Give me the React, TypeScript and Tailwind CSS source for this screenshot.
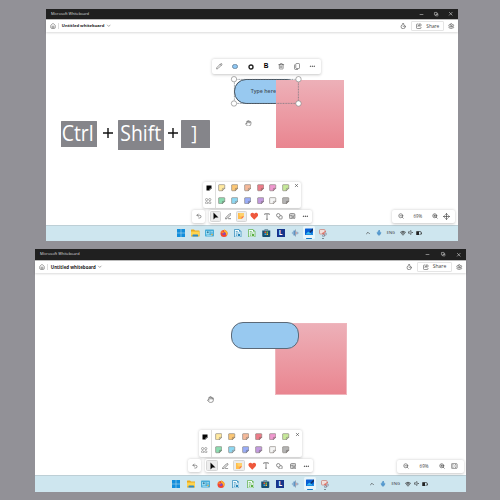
import React from "react";
import {
  ChevronDown, ChevronUp, Copy, Ellipsis, Hand, House, Mic, PenLine, Pencil, Settings,
  Timer, Trash2, Undo2, Wifi, X, ZoomIn, ZoomOut, Minus, Move,
} from "lucide-react";

type Size = "small" | "large";

const Cell = ({ w, children, className = "" }: { w: string; children?: React.ReactNode; className?: string }) => (
  <span className={`flex h-full shrink-0 items-center justify-center ${w} ${className}`}>{children}</span>
);

const Note = ({ color, fold, s = 7.4 }: { color: string; fold: string; s?: number }) => (
  <svg width={s} height={s} viewBox="0 0 14 14" className="shrink-0">
    <path d="M1.2 2.4Q1.2 1.2 2.4 1.2H11.6Q12.8 1.2 12.8 2.4V8.2L8.2 12.8H2.4Q1.2 12.8 1.2 11.6Z" fill={color} stroke="#85807a" strokeWidth="1.2" />
    <path d="M8.2 12.8V9.4Q8.2 8.2 9.4 8.2H12.8Z" fill={fold} stroke="#77736f" strokeWidth="1" />
  </svg>
);

const Pattern = () => (
  <svg width="6.4" height="6.4" viewBox="0 0 12 12" fill="none" stroke="#666" strokeWidth="1">
    {[3, 9].map((x) => [3, 9].map((y) => <circle key={`${x}-${y}`} cx={x} cy={y} r="2.1" />))}
  </svg>
);

const Black = () => (
  <svg width="6" height="6" viewBox="0 0 12 12">
    <path d="M1 1H11V7L7 11H1Z" fill="#050505" />
    <path d="M7 11V8Q7 7 8 7H11Z" fill="#bbb" />
  </svg>
);

const firstRow = [["#ffe9a0", "#fff1bd"], ["#fcc775", "#f7b760"], ["#f5b999", "#f1c7ae"], ["#ed7c89", "#e66576"], ["#ef98cf", "#e97fbf"], ["#c7e99a", "#d8f3b4"]];
const secondRow = [["#8cdcb1", "#6cce98"], ["#8ed8f3", "#b3e8f8"], ["#99adf8", "#8097ef"], ["#c39be0", "#b387d6"], ["#f5f5f5", "#ffffff"], ["#b4b4b4", "#929292"]];

const Palette = ({ size }: { size: Size }) => {
  const big = size === "large";
  const cell = big ? "w-[13.5px]" : "w-[12.8px]";
  const row = big ? "h-[13.4px]" : "h-[12.8px]";
  return (
    <div className={`absolute flex rounded-[2px] bg-white shadow-[0_0.5px_3px_rgba(0,0,0,0.22)] ${big ? "left-[163.5px] top-[181px] h-[27px] w-[103.5px]" : "left-[156.5px] top-[172.5px] h-[26px] w-[98.5px]"}`}>
      <div className="flex w-[13.1px] flex-col items-center border-r-[0.5px] border-[#ddd]">
        <Cell w="w-full" className="min-h-0 flex-1"><Black /></Cell>
        <Cell w="w-full" className="min-h-0 flex-1"><Pattern /></Cell>
      </div>
      <div>
        {[firstRow, secondRow].map((colors, i) => (
          <div key={i} className={`flex ${row}`}>
            {colors.map(([c, f]) => <Cell key={c} w={cell}><Note color={c} fold={f} /></Cell>)}
          </div>
        ))}
      </div>
      <X className={big ? "ml-[2.3px] mt-[1.5px] shrink-0" : "ml-[2.1px] mt-[1.8px] shrink-0"} size={5} color="#444" strokeWidth={2.8} />
    </div>
  );
};

const Shapes = () => (
  <svg width="6.5" height="6.5" viewBox="0 0 24 24" fill="none" stroke="#555" strokeWidth="2.4">
    <circle cx="8.5" cy="8.5" r="6.5" /><path d="M10.5 15v4.5q0 2.5 2.5 2.5h7q2.5 0 2.5-2.5v-7q0-2.5-2.5-2.5h-5" />
  </svg>
);

const Templates = () => (
  <svg width="6.4" height="6.4" viewBox="0 0 24 24" fill="none" stroke="#555" strokeWidth="2.4">
    <rect x="2" y="2" width="20" height="20" rx="4" /><path d="M2 8h20M8 8v14M13 13h5v5h-5z" />
  </svg>
);

const Heart = () => (
  <svg width="8.5" height="8.5" viewBox="0 0 24 24">
    <path d="M12 22L3 13C-3 5 7-2 12 5C17-2 27 5 21 13Z" fill="#ee583d" />
  </svg>
);

const Toolbar = ({ size }: { size: Size }) => {
  const big = size === "large";
  const cell = big ? "w-[13.5px]" : "w-[12.9px]";
  const hot = `rounded-[1.5px] border-[0.5px] border-[#d6d6d6] bg-[#ededed] ${big ? "h-[11px] w-[11.5px]" : "h-[10.5px] w-[11px]"} flex items-center justify-center`;
  const box = "flex items-center rounded-[2px] bg-white shadow-[0_0.5px_3px_rgba(0,0,0,0.22)]";
  return (
    <div className={`absolute flex ${big ? "left-[153.3px] top-[210.4px] h-[13px] gap-[4px]" : "left-[146px] top-[201px] h-[12.5px] gap-[3.8px]"}`}>
      <div className={`${box} w-[13px] justify-center`}><Undo2 size={6} color="#555" strokeWidth={2.4} /></div>
      <div className={box}>
        <Cell w={cell}>
          <span className={hot}>
            <svg width="7" height="8" viewBox="0 0 14 16"><path d="M3 1V15L7 11H13Z" fill="#080808" /></svg>
          </span>
        </Cell>
        <Cell w={cell}><PenLine size={6.5} color="#555" strokeWidth={2.6} /></Cell>
        <Cell w={cell}>
          <span className={hot}>
            <svg width="8" height="8" viewBox="0 0 16 16">
              <path d="M2 2H14V9L9 14H2Z" fill="#ffbd4c" /><path d="M14 2V9L9 14V10L5 7V2Z" fill="#ffd16b" /><path d="M9 14V10Q9 9 10 9H14Z" fill="#f56d48" />
            </svg>
          </span>
        </Cell>
        <Cell w={cell}><Heart /></Cell>
        <Cell w={cell}>
          <svg width="6" height="7" viewBox="0 0 12 14" fill="none" stroke="#666" strokeWidth="1.5"><path d="M1.5 4V1.5H10.5V4M6 1.5V12.5M4 12.5H8" /></svg>
        </Cell>
        <Cell w={cell}><Shapes /></Cell>
        <Cell w={cell}><Templates /></Cell>
        <Cell w={cell}><Ellipsis size={6.5} color="#333" strokeWidth={2.2} /></Cell>
      </div>
    </div>
  );
};

const ZoomBar = ({ size }: { size: Size }) => {
  const big = size === "large";
  return (
    <div className={`absolute flex items-center rounded-[2px] bg-white shadow-[0_0.5px_3px_rgba(0,0,0,0.22)] ${big ? "left-[362.3px] top-[210.5px] h-[13px] w-[66.5px]" : "left-[346px] top-[201px] h-[12.5px] w-[63px]"}`}>
      <Cell w={big ? "w-[18px]" : "w-[17px]"}><ZoomOut size={6} color="#555" strokeWidth={2.5} /></Cell>
      <Cell w="w-[17.5px]" className={`text-[#444] ${big ? "text-[4.6px]" : "text-[4.4px]"}`}>69%</Cell>
      <Cell w={big ? "w-[18px]" : "w-[17px]"}><ZoomIn size={6} color="#444" strokeWidth={2.5} /></Cell>
      <Cell w={big ? "w-[7px]" : "w-[6px]"}>
        {big ? (
          <svg className="shrink-0" width="6.5" height="6" viewBox="0 0 13 12" fill="none" stroke="#555" strokeWidth="1.2"><rect x=".7" y="1.2" width="11.6" height="9.6" rx="1.5" /><path d="M3 5V3.4h2M8 3.4h2V5M3 7v1.6h2M8 8.6h2V7M5.5 6h2" /></svg>
        ) : <Move size={7} className="shrink-0" color="#444" strokeWidth={2.3} />}
      </Cell>
    </div>
  );
};

function DocIcon({ color }: { color: string }) {
  return (
    <svg width="7.5" height="8.5" viewBox="0 0 15 17"><path d="M1 1H10L14 5V16H1Z" fill="#effbff" stroke={color} strokeWidth="1.4" /><path d="M10 1V5H14Z" fill={color} /><path d="M3.5 5H7.5M3.5 8H11M3.5 10.5H6M3.5 13H6" stroke={color} strokeWidth="1.3" /><path d="M7.5 10H12V14H7.5Z" fill={color} /></svg>
  );
}

const apps: React.ReactNode[] = [
  <svg width="8" height="8" viewBox="0 0 16 16"><path d="M0 0H7.5V7.5H0ZM8.5 0H16V7.5H8.5ZM0 8.5H7.5V16H0ZM8.5 8.5H16V16H8.5Z" fill="#138edc" /></svg>,
  <svg width="8.5" height="8" viewBox="0 0 17 16"><path d="M0 2Q0 1 1 1H6L8 3H16Q17 3 17 4V14Q17 15 16 15H1Q0 15 0 14Z" fill="#e9a91f" /><path d="M0 5H17V13H0Z" fill="#ffd34e" /><path d="M3 15V12Q3 11 4 11H13Q14 11 14 12V15Z" fill="#2d8ac8" /></svg>,
  <svg width="9" height="8" viewBox="0 0 18 16"><rect y="1" width="18" height="14" rx="1.5" fill="#47acd8" /><path d="M2 4H9V11H2Z" fill="#a2e1f5" /><circle cx="5.5" cy="6.5" r="2" fill="#397b9e" /><path d="M11 5H16M11 8H16M3 13H14" stroke="#d9f5ff" /><circle cx="14" cy="11" r="1.7" fill="#e6b351" /></svg>,
  <svg width="8" height="8" viewBox="0 0 16 16"><circle cx="8" cy="9" r="7" fill="#f34631" /><path d="M9 0Q10 3 14 5Q17 11 12 14Q14 9 9 6Q7 4 9 0Z" fill="#ffb52b" /><circle cx="8" cy="9" r="3.2" fill="#844ac1" /><path d="M1 6L4 3L6 6L9 7L6 9Z" fill="#ff842f" /></svg>,
  <DocIcon color="#2685b7" />,
  <DocIcon color="#5aae42" />,
  <svg width="8.5" height="8" viewBox="0 0 16 16"><path d="M5 3V1H11V3" fill="none" stroke="#27546b" /><path d="M0 3H16V14Q16 16 14 16H2Q0 16 0 14Z" fill="#164f70" /><path d="M4.5 5H7.5V8H4.5Z" fill="#f25838" /><path d="M8.5 5H11.5V8H8.5Z" fill="#7cba3a" /><path d="M4.5 9H7.5V12H4.5Z" fill="#33a9e8" /><path d="M8.5 9H11.5V12H8.5Z" fill="#ffc136" /></svg>,
  <span className="flex h-[8px] w-[8px] items-center justify-center bg-[#17358b] text-[6.5px] font-bold leading-none text-white">L</span>,
  <svg width="8" height="8" viewBox="0 0 16 16"><path d="M1 8L5 4V12ZM16 8L11 4V12Z" fill="#8fb3d0" /><path d="M5 3H8V13H5Z" fill="#5f93c6" /><path d="M9 1V15" stroke="#8494a8" strokeWidth="1.6" /><circle cx="11" cy="8" r="1.5" fill="#d9908e" /></svg>,
  <span className="flex h-[13px] w-[12px] flex-col items-center rounded-[1.5px] bg-[#e8f5fa] pt-[2px]">
    <svg width="8.5" height="7.5" viewBox="0 0 16 14"><rect y="1" width="16" height="12" rx="1" fill="#075fd5" /><path d="M1 12Q6 4 10 9T15 7V12Z" fill="#36b9ef" /><path d="M8 8L14 1L16 3L10 9Z" fill="#142b5a" /></svg>
    <span className="mt-[2px] h-[1.2px] w-[5.5px] rounded-full bg-[#147ac4]" />
  </span>,
  <span className="flex flex-col items-center pt-[2px]">
    <svg width="8" height="8" viewBox="0 0 16 16"><rect x="1" y="1" width="11" height="9" rx="1.5" fill="#f1e0dc" stroke="#c98078" strokeWidth="1.5" /><path d="M6 10L14 4M8 7L12 14" stroke="#d95d50" strokeWidth="1.6" /><circle cx="13.5" cy="10" r="2" fill="none" stroke="#8194aa" strokeWidth="1.3" /><circle cx="9" cy="13.5" r="2" fill="none" stroke="#697c91" strokeWidth="1.3" /></svg>
    <span className="mt-[0.6px] h-[1px] w-[2px] rounded-full bg-[#70818a]" />
  </span>,
];

const Taskbar = ({ size }: { size: Size }) => {
  const big = size === "large";
  return (
    <div className={`flex shrink-0 items-center border-t-[0.5px] border-[#bdcfd6] bg-[#cee6ef] ${big ? "h-[17px] pb-[0.5px] pl-[133.5px]" : "h-[16px] pb-[1.2px] pl-[128px]"}`}>
      {apps.map((a, i) => <Cell key={i} w={big ? "w-[14.92px]" : "w-[14.22px]"}>{a}</Cell>)}
      <div className={`flex h-full items-center text-[#333] ${big ? "ml-[34px]" : "ml-[32.7px]"}`}>
        <Cell w={big ? "w-[11px]" : "w-[10.5px]"}><ChevronUp size={6} strokeWidth={2.5} /></Cell>
        <Cell w={big ? "w-[11px]" : "w-[10.5px]"}><Mic size={6} color="#347fba" fill="#73b2e5" strokeWidth={2.3} /></Cell>
        <Cell w={big ? "w-[14.5px]" : "w-[13.5px]"} className={big ? "text-[4.2px]" : "text-[4px]"}>ENG</Cell>
        <Cell w={big ? "w-[11px]" : "w-[10.5px]"}><Wifi size={6} strokeWidth={3.2} /></Cell>
        <Cell w={big ? "w-[6px]" : "w-[5.5px]"}>
          <svg width="5" height="5" viewBox="0 0 10 10" fill="none" stroke="#333" strokeWidth="1.2"><path d="M1 3.5H3L6 1V9L3 6.5H1ZM7.5 4L9.5 6M9.5 4L7.5 6" /></svg>
        </Cell>
        <Cell w="w-[10px]">
          <svg width="6" height="4.5" viewBox="0 0 12 9"><rect x=".7" y="1" width="9.3" height="7" rx="1.2" fill="none" stroke="#222" strokeWidth="1.2" /><path d="M1 1H6V8H1ZM10.5 3H11.8V6H10.5Z" fill="#222" /></svg>
        </Cell>
      </div>
    </div>
  );
};

const Header = ({ size }: { size: Size }) => {
  const big = size === "large";
  return (
    <>
      <div className={`flex shrink-0 items-center bg-[#202020] pl-[5px] text-[#dedede] ${big ? "h-[10.5px]" : "h-[10.2px]"}`}>
        <span className={`whitespace-nowrap leading-none ${big ? "text-[3.9px]" : "text-[3.75px]"}`}>Microsoft Whiteboard</span>
        <div className="ml-auto flex h-full">
          <Cell w={big ? "w-[15.5px]" : "w-[14.8px]"}><Minus size={5} strokeWidth={2.5} /></Cell>
          <Cell w={big ? "w-[15.5px]" : "w-[14.8px]"}><Copy size={4.5} strokeWidth={3} className="-scale-x-100 rotate-90" /></Cell>
          <Cell w={big ? "w-[15.5px]" : "w-[14.8px]"}><X size={5.5} strokeWidth={2.5} /></Cell>
        </div>
      </div>
      <div className={`z-10 flex shrink-0 items-center border-t-[0.5px] border-[#bbb] bg-white pl-[3.5px] text-[#444] shadow-[0_1px_2px_rgba(0,0,0,0.15)] ${big ? "h-[13.5px]" : "h-[12.6px]"}`}>
        <House size={6} strokeWidth={2} />
        <span className="ml-[2.5px] h-[6px] w-[0.5px] bg-[#ddd]" />
        <span className={`ml-[3.3px] whitespace-nowrap font-bold leading-none text-[#222] ${big ? "text-[4.45px]" : "text-[4.2px]"}`}>Untitled whiteboard</span>
        <ChevronDown className="ml-[1.5px]" size={5.5} strokeWidth={2} />
        <div className="ml-auto flex h-full items-center">
          <Timer size={6.3} strokeWidth={2.2} />
          <div className={`ml-[4.8px] flex h-[10.5px] items-center justify-center gap-[4px] rounded-[1px] border border-[#e5e5e5] leading-none ${big ? "w-[35px] text-[5px]" : "w-[33px] text-[4.8px]"}`}>
            <svg width="6" height="6" viewBox="0 0 12 12" fill="none" stroke="#444" strokeWidth="1.1"><path d="M5 2H2.5Q1 2 1 3.5V9.5Q1 11 2.5 11H8.5Q10 11 10 9.5V8M7.5 1L11 4L7.5 7V5Q5 5 4 7Q4 3 7.5 3Z" /></svg>
            Share
          </div>
          <Settings className={big ? "ml-[4px] mr-[3.5px]" : "ml-[4px] mr-[3.2px]"} size={6.5} strokeWidth={2.2} />
        </div>
      </div>
    </>
  );
};

const FormatBar = () => (
  <div className="absolute left-[166px] top-[50px] flex h-[15px] w-[108.5px] items-center rounded-[2px] bg-white text-[#444] shadow-[0_0.5px_3px_rgba(0,0,0,0.22)]">
    <Cell w="w-[15.45px]"><Pencil size={6.5} strokeWidth={2} /></Cell>
    <Cell w="w-[15.45px]"><span className="h-[5.5px] w-[5.5px] rounded-full border-[0.5px] border-[#718ca3] bg-[#8dc7f4]" /></Cell>
    <Cell w="w-[15.45px]">
      <svg width="6" height="6" viewBox="0 0 12 12"><circle cx="6" cy="6" r="4" fill="none" stroke="#222" strokeWidth="2.8" /></svg>
    </Cell>
    <Cell w="w-[15.45px]" className="font-['Liberation_Sans',sans-serif] text-[6.5px] font-bold leading-none text-black">B</Cell>
    <Cell w="w-[15.45px]"><Trash2 size={6.5} strokeWidth={2} /></Cell>
    <Cell w="w-[15.45px]">
      <svg width="6" height="7" viewBox="0 0 12 14" fill="none" stroke="#444" strokeWidth="1.1"><rect x="3.5" y="1" width="7.5" height="10" rx="1.5" /><path d="M2 3Q1 3 1 5V11Q1 13 3 13H8" /></svg>
    </Cell>
    <Cell w="w-[15.45px]"><Ellipsis size={6.5} strokeWidth={2.2} /></Cell>
  </div>
);

const Selection = () => (
  <svg className="absolute left-[184px] top-[66px]" width="73" height="33" viewBox="0 0 73 33">
    <rect x="4.4" y="4.4" width="64" height="24" fill="none" stroke="#6c747b" strokeWidth=".7" strokeDasharray="1 .6" />
    {[[4, 4.2], [68.5, 4.2], [4, 28.5], [68.5, 28.5]].map(([x, y]) => <circle key={`${x},${y}`} cx={x} cy={y} r="2.7" fill="#fff" stroke="#777" strokeWidth=".6" />)}
  </svg>
);

const key = "flex items-center justify-center whitespace-nowrap rounded-[0.5px] bg-[#85858a] leading-none text-white";

const Plus = ({ className }: { className: string }) => (
  <svg className={`shrink-0 ${className}`} width="10" height="10" viewBox="0 0 10 10"><path d="M5 0V10M0 5H10" stroke="#111" strokeWidth="1.4" /></svg>
);

const Shortcut = () => (
  <div className="absolute left-[14.5px] top-[111px] flex items-start">
    <div className={`${key} mt-[1px] h-[25.5px] w-[36.5px] pb-[1.5px] pr-[2px] text-[21.5px]`}>
      <span className="scale-x-[0.9]">Ctrl</span>
    </div>
    <Plus className="ml-[6px] mt-[7.5px]" />
    <div className={`${key} ml-[5px] h-[29.7px] w-[45.5px] pb-[3.5px] pr-[1px] text-[21.5px]`}>
      <span className="scale-x-[0.9]">Shift</span>
    </div>
    <Plus className="ml-[4px] mt-[7.5px]" />
    <div className={`${key} ml-[3.5px] h-[27.7px] w-[28.5px] pb-[2px] pr-[1px] text-[20px]`}>
      <span className="scale-x-[0.9]">]</span>
    </div>
  </div>
);

export default function App() {
  return (
    <main className="flex h-[500px] w-[500px] flex-col overflow-hidden bg-[#929197] pt-[9px] font-['Open_Sans','Noto_Sans',sans-serif]">
      <section className="relative ml-[46px] flex h-[232px] w-[412px] shrink-0 flex-col bg-white">
        <Header size="small" />
        <div className="flex-1" />
        <Taskbar size="small" />
        <FormatBar />
        <div className="absolute left-[187.5px] top-[70px] flex h-[25px] w-[65px] items-center rounded-[12px] border border-[#3f4e5c] bg-[#98c9f0] pl-[16.2px] text-[5.3px] font-semibold text-[#46515e]">Type here</div>
        <div className="absolute left-[230px] top-[71px] h-[68px] w-[68px] bg-gradient-to-b from-[#edb0b8] to-[#e98590]" />
        <Selection />
        <Hand className="absolute left-[199px] top-[110.5px]" size={6.5} color="#555" strokeWidth={2} />
        <Shortcut />
        <Palette size="small" />
        <Toolbar size="small" />
        <ZoomBar size="small" />
      </section>
      <section className="relative ml-[35px] mt-[8px] flex h-[243px] w-[431px] shrink-0 flex-col bg-white">
        <Header size="large" />
        <div className="flex-1" />
        <Taskbar size="large" />
        <div className="absolute left-[240px] top-[74px] h-[71.5px] w-[72px] border border-[#efb6bd] bg-gradient-to-b from-[#edb0b8] to-[#e98590]" />
        <div className="absolute left-[196px] top-[73px] h-[27px] w-[68.4px] rounded-[12px] border border-[#5c6977] bg-[#98c9f0]" />
        <Hand className="absolute left-[172px] top-[146.5px]" size={7} color="#555" strokeWidth={2} />
        <Palette size="large" />
        <Toolbar size="large" />
        <ZoomBar size="large" />
      </section>
    </main>
  );
}
